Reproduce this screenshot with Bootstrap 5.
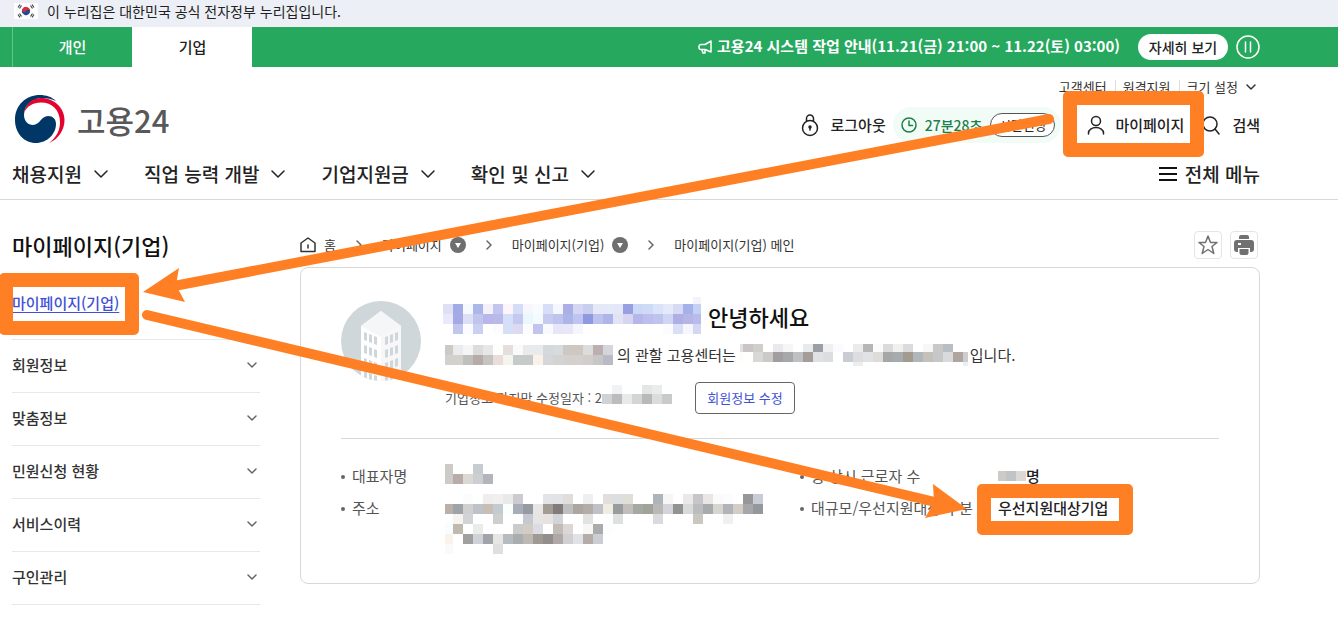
<!DOCTYPE html>
<html lang="ko">
<head>
<meta charset="utf-8">
<meta name="viewport" content="width=device-width, initial-scale=1">
<title>마이페이지(기업) - 고용24</title>
<link href="https://cdn.jsdelivr.net/npm/bootstrap@5.3.0/dist/css/bootstrap.min.css" rel="stylesheet">
<style>
  body { font-family: "Noto Sans CJK KR", sans-serif; font-size: 15px; line-height: 20px; color: #222; overflow-x: hidden; }
  a { color: inherit; text-decoration: none; }
  svg { display: block; flex: none; }
  .plain { border: 0; background: none; padding: 0; color: inherit; font: inherit; }
  .ic { fill: none; stroke: currentColor; stroke-width: 1.5; stroke-linecap: round; stroke-linejoin: round; }
  .wrap { padding-left: 12px; padding-right: 78px; }
  .gov-bar { background: #eceff5; height: 27px; font-size: 14px; padding-bottom: 6px; gap: 9px; padding-left: 14px; }
  .top-bar { background: #26a95f; height: 40px; color: #fff; }
  .top-tab { width: 120px; font-weight: 500; border-left: 1px solid #67c48f; }
  .top-tab.active { background: #fff; color: #222; border-color: #fff; }
  .notice { font-size: 15px; font-weight: 700; padding-bottom: 2px; }
  .pill-white { background: #fff; color: #222; border-radius: 13px; width: 90px; height: 26px; font-size: 14px; font-weight: 500; margin-left: 18px; }
  .site-head { border-bottom: 1px solid #d8d8d8; height: 133px; }
  .util { font-size: 13px; color: #333; height: 20px; margin-top: 10px; }
  .util > * { line-height: 14px; }
  .util > * + * { border-left: 1px solid #ddd; margin-left: 8px; padding-left: 7px; }
  .logo { font-size: 31px; line-height: 40px; font-weight: 500; color: #58585a; gap: 12px; padding: 28px 0 0 3px; }
  .tools { font-weight: 500; height: 36px; margin-top: 10px; }
  .tools .lock { gap: 9px; }
  .timer { background: #f2fcf7; color: #1d804b; border-radius: 18px; height: 36px; padding: 0 6px 0 8px; gap: 8px; font-size: 14px; margin-left: 7px; }
  .timer button { width: 65px; height: 24px; border: 1px solid #555; border-radius: 12px; background: #fff; color: #222; font-size: 13px; line-height: 20px; }
  .main-nav { font-size: 19px; line-height: 28px; font-weight: 500; height: 28px; margin-top: 16px; }
  .main-nav button { gap: 12px; }
  .main-nav .all-menu { gap: 8px; }
  .nav-set { gap: 36px; }
  .page-cols { gap: 40px; }
  .side { width: 248px; flex: none; }
  .side h1 { font-size: 22px; line-height: 32px; font-weight: 500; color: #111; margin: 29px 0 32px; }
  .side li { height: 53px; border-bottom: 1px solid #e8e8e8; font-weight: 500; color: #333; padding: 0 2px 2px 0; }
  .side li svg { color: #666; }
  .side li.first { height: 47px; padding-bottom: 26px; }
  .side li.first a { color: #3f52d6; text-decoration: underline; text-underline-offset: 3px; }
  .content { min-width: 0; }
  .crumbs { font-size: 13px; height: 28px; margin-top: 31px; color: #333; }
  .crumbs .sep { margin: 0 19px; color: #666; }
  .crumb-tools { padding-right: 2px; }
  .sq { width: 28px; height: 28px; border: 1px solid #e5e5e5; border-radius: 4px; color: #707070; }
  .panel { border: 1px solid #d8d8d8; border-radius: 8px; margin-top: 8px; padding: 29px 40px 25px; min-height: 317px; }
  .intro { gap: 22px; }
  .indent { padding-left: 2px; }
  .hello { font-size: 22px; line-height: 34px; font-weight: 500; color: #111; gap: 7px; }
  .center-line { line-height: 24px; margin-top: 9px; color: #333; }
  .date-line { font-size: 13px; margin-top: 15px; color: #555; }
  .edit { width: 100px; height: 32px; font-size: 13px; color: #4050d8; background: #fff; border: 1px solid #666; border-radius: 4px; margin-left: 22px; }
  .facts { border-top: 1px solid #d8d8d8; margin-top: 24px; padding-top: 21px; column-gap: 40px; display: grid; grid-template-columns: 1fr 1fr; }
  .facts dl { margin: 0; display: grid; line-height: 32px; }
  .facts dt, .facts dd { margin: 0; font-weight: 400; color: #555; }
  .facts dt::before { content: ""; display: inline-block; width: 4px; height: 4px; border-radius: 2px; background: #666; margin-right: 7px; vertical-align: 3px; }
  .facts dd { color: #222; font-weight: 500; }
  .left-facts { grid-template-columns: 104px 1fr; }
  .facts .right-facts { grid-template-columns: 198px 1fr; margin-left: -3px; }
  .marks { position: absolute; left: 0; top: 0; pointer-events: none; }
</style>
<script src="https://cdn.jsdelivr.net/npm/bootstrap@5.3.0/dist/js/bootstrap.bundle.min.js"></script>
</head>
<body class="position-relative">

<div class="gov-bar d-flex align-items-center">
  <svg width="24" height="16" viewBox="0 0 24 16"><rect width="24" height="16" fill="#fff"/><g transform="rotate(25 12 8)"><path d="M8 8a4 4 0 0 1 8 0z" fill="#d5303e"/><path d="M8 8a4 4 0 0 0 8 0z" fill="#1d4b9c"/><circle cx="10" cy="8" r="2" fill="#d5303e"/><circle cx="14" cy="8" r="2" fill="#1d4b9c"/></g><path d="M4 4.500l2-3M5.500 5.500l2-3M18 1.500l2 3M16.500 2.500l2 3M4 11.500l2 3M5.500 10.500l2 3M18 14.500l2-3M16.500 13.500l2-3" stroke="#444" stroke-width="1.200"/></svg>
  <span>이 누리집은 대한민국 공식 전자정부 누리집입니다.</span>
</div>

<div class="top-bar wrap d-flex">
  <a href="#" class="top-tab d-flex align-items-center justify-content-center">개인</a>
  <a href="#" class="top-tab active d-flex align-items-center justify-content-center">기업</a>
  <div class="ms-auto d-flex align-items-center">
    <svg class="ic" width="15" height="14" viewBox="0 0 15 14"><path d="M13 1v11L7 9.500H3a2 2 0 0 1-2-2v-1a2 2 0 0 1 2-2h4zM4 10l1 3h2V10"/></svg>
    <a href="#" class="notice ms-1">고용24 시스템 작업 안내(11.21(금) 21:00 ~ 11.22(토) 03:00)</a>
    <button type="button" class="plain pill-white">자세히 보기</button>
    <button type="button" class="plain ms-2" aria-label="정지"><svg class="ic" width="24" height="24" viewBox="0 0 24 24"><circle cx="12" cy="12" r="11"/><path d="M9.500 7v10M14.500 7v10"/></svg></button>
  </div>
</div>

<header class="site-head wrap">
  <div class="d-flex justify-content-between">
    <a href="#" class="logo d-flex align-items-center">
      <svg width="50" height="49" viewBox="0 0 50 49"><path d="M41 6C37 2 31 0 25 0 11 0 0 10 0 25c0 13 9 23 21 23 11 0 20-9 20-19 0-5-3-8-8-8-7 0-8 9-15 9-5 0-9-4-9-10C9 10 17 4 26 3c6 0 11 1 15 3z" fill="#003767"/><path d="M9 18C11 8 18 3 26 3c13 0 23.500 10 23.500 22 0 10-6 19-15.500 23 8-6 11-13 11-21C45 15 37 7.500 26 7.500 18 7.500 12 11 9 18z" fill="#e4032e"/></svg>
      <span>고용24</span>
    </a>
    <div>
      <div class="util d-flex justify-content-end align-items-center">
        <a href="#">고객센터</a><a href="#">원격지원</a>
        <button type="button" class="util-size border-top-0 border-end-0 border-bottom-0 bg-transparent py-0 pe-1 text-reset d-flex align-items-center gap-2">크기 설정 <svg class="ic" width="10" height="8" viewBox="0 0 10 8"><path d="M1 2l4 4 4-4"/></svg></button>
      </div>
      <div class="tools d-flex align-items-center">
        <a href="#" class="lock d-flex align-items-center">
          <svg class="ic" width="22" height="24" viewBox="0 0 22 24"><circle cx="11" cy="15" r="7.500"/><path d="M7.500 8V5.500a3.500 3.500 0 0 1 7 0V8"/><circle cx="11" cy="14" r="1" fill="currentColor"/><path d="M11 14v3"/></svg>로그아웃</a>
        <div class="timer d-flex align-items-center">
          <svg class="ic" width="16" height="16" viewBox="0 0 16 16"><circle cx="8" cy="8" r="7"/><path d="M8 4v4.500h3.500"/></svg>
          <span>27분28초</span><button type="button" class="p-0">시간연장</button>
        </div>
        <a href="#" class="d-flex align-items-center ms-4"><svg class="ic me-2" width="22" height="20" viewBox="0 0 22 20"><circle cx="11" cy="6" r="4.500"/><path d="M3.500 19v-1a7.500 5.500 0 0 1 15 0v1"/></svg>마이페이지</a>
        <a href="#" class="d-flex align-items-center ms-3 gap-2"><svg class="ic me-1" width="20" height="20" viewBox="0 0 20 20"><circle cx="10" cy="9" r="7"/><path d="M15 14l4 5"/></svg>검색</a>
      </div>
    </div>
  </div>
  <nav class="main-nav d-flex align-items-center">
    <div class="d-flex nav-set">
      <button type="button" class="plain d-flex align-items-center">채용지원 <svg class="ic" width="14" height="10" viewBox="0 0 14 10"><path d="M1 2l6 6 6-6"/></svg></button>
      <button type="button" class="plain d-flex align-items-center">직업 능력 개발 <svg class="ic" width="14" height="10" viewBox="0 0 14 10"><path d="M1 2l6 6 6-6"/></svg></button>
      <button type="button" class="plain d-flex align-items-center">기업지원금 <svg class="ic" width="14" height="10" viewBox="0 0 14 10"><path d="M1 2l6 6 6-6"/></svg></button>
      <button type="button" class="plain d-flex align-items-center">확인 및 신고 <svg class="ic" width="14" height="10" viewBox="0 0 14 10"><path d="M1 2l6 6 6-6"/></svg></button>
    </div>
    <button type="button" class="plain d-flex align-items-center ms-auto all-menu"><svg width="18" height="16" viewBox="0 0 18 16"><path d="M0 2h18M0 8h18M0 14h18" stroke="#111" stroke-width="2"/></svg>전체 메뉴</button>
  </nav>
</header>

<div class="wrap d-flex page-cols">
  <aside class="side">
    <h1>마이페이지(기업)</h1>
    <ul class="list-unstyled m-0">
      <li class="first d-flex align-items-center"><a href="#">마이페이지(기업)</a></li>
      <li class="d-flex align-items-center justify-content-between"><a href="#">회원정보</a><svg class="ic" width="12" height="8" viewBox="0 0 12 8"><path d="M2 2l4 4 4-4"/></svg></li>
      <li class="d-flex align-items-center justify-content-between"><a href="#">맞춤정보</a><svg class="ic" width="12" height="8" viewBox="0 0 12 8"><path d="M2 2l4 4 4-4"/></svg></li>
      <li class="d-flex align-items-center justify-content-between"><a href="#">민원신청 현황</a><svg class="ic" width="12" height="8" viewBox="0 0 12 8"><path d="M2 2l4 4 4-4"/></svg></li>
      <li class="d-flex align-items-center justify-content-between"><a href="#">서비스이력</a><svg class="ic" width="12" height="8" viewBox="0 0 12 8"><path d="M2 2l4 4 4-4"/></svg></li>
      <li class="d-flex align-items-center justify-content-between"><a href="#">구인관리</a><svg class="ic" width="12" height="8" viewBox="0 0 12 8"><path d="M2 2l4 4 4-4"/></svg></li>
    </ul>
  </aside>
  <main class="content flex-grow-1">
    <div class="crumbs d-flex align-items-center">
      <a href="#" class="d-flex align-items-center gap-2"><svg class="ic" width="16" height="16" viewBox="0 0 16 16"><path d="M1 6l7-5 7 5v8.500H1zM8 8v3"/></svg>홈</a>
      <svg class="ic sep" width="8" height="10" viewBox="0 0 8 10"><path d="M2 1l4 4-4 4"/></svg>
      <a href="#" class="d-flex align-items-center gap-2">마이페이지 <svg width="16" height="16" viewBox="0 0 16 16"><circle cx="8" cy="8" r="8" fill="#6f6f6f"/><path d="M5 6h6l-3 5z" fill="#fff"/></svg></a>
      <svg class="ic sep" width="8" height="10" viewBox="0 0 8 10"><path d="M2 1l4 4-4 4"/></svg>
      <a href="#" class="d-flex align-items-center gap-2">마이페이지(기업) <svg width="16" height="16" viewBox="0 0 16 16"><circle cx="8" cy="8" r="8" fill="#6f6f6f"/><path d="M5 6h6l-3 5z" fill="#fff"/></svg></a>
      <svg class="ic sep" width="8" height="10" viewBox="0 0 8 10"><path d="M2 1l4 4-4 4"/></svg>
      <span>마이페이지(기업) 메인</span>
      <div class="crumb-tools d-flex gap-2 ms-auto">
        <button type="button" class="p-0 bg-transparent sq d-flex align-items-center justify-content-center" aria-label="즐겨찾기"><svg class="ic" width="22" height="22" viewBox="0 0 22 22"><path d="M11 2l2.500 6.500H20L15 12.500l1.800 7L11 15.500l-5.800 4L7 12.500 2 8.500h6.500z"/></svg></button>
        <button type="button" class="p-0 bg-transparent sq d-flex align-items-center justify-content-center" aria-label="인쇄"><svg width="20" height="20" viewBox="0 0 20 20" fill="#707070"><path d="M5 4V2q0-2 2-2h6q2 0 2 2v2zM3 5h14q3 0 3 3v6q0 3-3 3h-1v-4H4v4H3q-3 0-3-3V8q0-3 3-3z"/><path d="M5.500 14h9v4q0 2-2 2h-5q-2 0-2-2z"/><rect x="4" y="8" width="3" height="2" fill="#fff"/></svg></button>
      </div>
    </div>
    <section class="panel">
      <div class="d-flex intro">
        <svg width="80" height="84" viewBox="0 0 80 84">
          <defs><clipPath id="round"><circle cx="40" cy="44" r="40"/></clipPath></defs>
          <g clip-path="url(#round)"><rect width="80" height="84" fill="#cfd7da"/>
          <path d="M20 29l20-15 20 15v55H20z" fill="#fff"/><path d="M20 29l20-15 20 15-20 11z" fill="#f5f6f7"/><path d="M40 40l20-11v55H40z" fill="#f7f7f8"/>
          <g fill="#cfd7da" id="windows"></g></g>
        </svg>
        <div>
          <div class="hello d-flex align-items-center"><svg class="mosaic" width="258" height="37" viewBox="0 0 258 37" data-y="0,7,17,27" data-rows="- - - - - - - - - - - - - - - - - - - - - - - - - f3f3fd|dfdff5 a3abe6 f4fafe abb6e9 f2f1fc c2c5ee fcf6fb d5ddf6 f5f6fe f9fcfe d8def7 f6f7fe abafe6 d5d6f4 c8ceee e5e8f7 e5e8f7 e4e7f8 989fe3 cbd9f6 cfdbf6 dae3fa e4eaf9 d6daf5 a7b1e9 c3d1f4|ebe9f9 a5a9e6 dddff5 c1c5ee b8b7eb bab9ea d4e0fa c6c8f0 eaf8fd f3fbfe c5caef bfc4ee acb5e9 c0c5ef 8f99e0 bcc2ed aeb6e9 e3e3f6 d6d5f2 b5b7ea bdbeec bfc4ee cfd6f4 b1aee5 b6b5e8 b9bbec|- c1c6ef fbfcff c9d0f2 - fcfcff d5dff6 dcdaf2 fcfcff c2c3ef f8fbfe e7e6f8 e8e6f8 f4f5fd - - - - - - - - fbfcff d8dff7 f7f5fd d3d7f4"></svg>안녕하세요</div>
          <div class="center-line indent d-flex align-items-center">
            <svg class="mosaic" width="168" height="20" viewBox="2 0 168 20" data-y="0,10" data-rows="cdc9c6 e9ebec f4f5f5 dcdddb e7e7e7 fefefe e4dfdd fafafa e9eaeb e9eaeb d4d9dc d7dbde cdc8c1 cdc8c1 dcdddb bbafb1 d4d6da|d3d1ce d3d1ce bfbfbf b5aca8 c8c3c1 e8ddd8 f4f4f1 c6cac9 c6cac9 faf1e8 d4d6d9 d3d3d1 d3d0ce d3d0ce d0cdca c7c7c8 b9bac5"></svg>
            <span class="px-1">의 관할 고용센터는</span>
            <svg class="mosaic" width="228" height="22" viewBox="7 0 228 22" data-y="0,8,18" data-rows="e2e2e3 c9c5c5 d0cecb - e8eaed f6f6f7 - e9eaeb 9b9ea5 f0f0f2 f9fbff - ebebed b8b5b6 fbfbfb dadbdd f0f0ef dadbdc - f6f7f7 c8c8c7 b9bec4|fdfcf5 - d8d8d7 cacac9 a19da1 a6a8a9 bfc0c1 a49c98 dfe1e4 dcdddf - c9ccd2 dddddf e0e2e5 dedcd8 a5a7a7 a6acad a39a90 b1b6b8 c3c1b9 c5c7c9 d9dadb afa49f cccdd1|- - - - - - - - - - - - ededee - - - - - - - - - - ededf2"></svg>
            <span class="indent">입니다.</span>
          </div>
          <div class="date-line indent d-flex align-items-center">기업정보 마지막 수정일자 : 2
            <svg class="mosaic mb-2" width="71" height="19" viewBox="0 0 71 19" data-y="0,9" data-rows="- f1f2f3 - - e3e6e7 ebebea -|d0d2d6 bcbcbc e8e9e9 d3d5d6 b8b9b9 dadcde c9caca"></svg>
            <button type="button" class="edit p-0">회원정보 수정</button>
          </div>
        </div>
      </div>
      <div class="facts">
        <dl class="left-facts">
          <dt>대표자명</dt><dd><svg class="mosaic mt-1" width="48" height="20" viewBox="2 0 48 20" data-y="0,10" data-rows="cdcbc7 - - c7ccd0 -|cdcbc7 b7aca7 dcd8d4 cccecf b2b6bb"></svg></dd>
          <dt>주소</dt><dd><svg class="mosaic" width="318" height="62" viewBox="2 -2 318 62" data-y="0,10,20,30,40,50" data-rows="- - fcfcfc - eeeeee f2f0ef e9e9ea ccccd0 - - e2e4e8 e1e3e6 dfdedd - efefef - e2dedd dcdfe2 e0ded9 - - adb4ba f6f6f7 - ebe9e8 c6c5ca e9e7e6 fafafa fbfcfe - 979797 c7ccd7|bbb0a9 9fa3a7 d0d0d1 c0c2c9 c8beb6 c2cbcf f9ffff a7aeb9 969aa2 e8e6e5 a39c94 817b7a bfbfbf aca6a3 b3aca8 bfc0c8 f1ece1 989c9b c2bebc a5a9a4 a1a39b bab8b6 d4d5da 919292 dadada bbbdbc a7abaa d7d5cf b1b3b8 d3cdc5 a6a7ab 94989d|fdfeff f6f3f1 d1d3d5 - - cccfcd - - c5c8ce e6e5e3 e6e2df d3d4d8 - - e2e2e1 - - dfe1e1 - - - d9dadd - - - cac6c2 - - f0f0f0|fafdff bfb9b0 - ebebea - - - cbcbcb d1ccc6 dbdde2 - c1bcb7 dcd7d5 - f7f7f7 ababad fbfdff|faf3eb - a0a0a1 cfd3d7 a0a3aa e7e6e5 b6bbbf aaadaf bdb9b1 9e9993 928e8b aea9a6 d0d0d2 e0e2e7 b5aca8 cacdd4|fafafa - - - - dfdfdf"></svg></dd>
        </dl>
        <dl class="right-facts align-content-start">
          <dt>총 상시 근로자 수</dt><dd class="d-flex align-items-center"><svg class="mosaic" width="28" height="10" viewBox="2 0 28 10" data-y="0" data-rows="cecac8 c2c3c5 dcd8d6"></svg>명</dd>
          <dt>대규모/우선지원대상 구분</dt><dd>우선지원대상기업</dd>
        </dl>
      </div>
    </section>
  </main>
</div>

<svg class="marks" width="1338" height="620" viewBox="0 0 1338 620" fill="#ff8024" fill-rule="evenodd" aria-hidden="true">
  <path d="M1049 119L174 286M147 315l788 187" stroke="#ff8024" stroke-width="10" stroke-linecap="round"/>
  <path d="M143 292l36-24-3 17 9 17zM967 509l-34-25 1 18-9 16z"/>
  <path d="M1068 91h131a5 5 0 0 1 5 5v56a5 5 0 0 1-5 5h-131a5 5 0 0 1-5-5V96a5 5 0 0 1 5-5zM1077 105v38h113v-38z"/>
  <path d="M4 273h130a5 5 0 0 1 5 5v52a5 5 0 0 1-5 5H4a5 5 0 0 1-5-5v-52a5 5 0 0 1 5-5zM13 287v34h112v-34z"/>
  <path d="M982 484h146a5 5 0 0 1 5 5v41a5 5 0 0 1-5 5H982a5 5 0 0 1-5-5v-41a5 5 0 0 1 5-5zM991 498v23h128v-23z"/>
</svg>

<script>
  // Privacy mosaics: each row lists the colours of 10px cells, "-" is an empty cell.
  document.querySelectorAll('.mosaic').forEach(function (svg) {
    var ys = svg.dataset.y.split(',').map(Number), bottom = svg.viewBox.baseVal.height + svg.viewBox.baseVal.y;
    svg.innerHTML = svg.dataset.rows.split('|').map(function (row, r) {
      var h = (ys[r + 1] || bottom) - ys[r];
      return row.split(' ').map(function (c, i) {
        return c === '-' ? '' : '<rect x="' + i * 10 + '" y="' + ys[r] + '" width="10" height="' + h + '" fill="#' + c + '"/>';
      }).join('');
    }).join('');
    svg.setAttribute('shape-rendering', 'crispEdges');
  });
  // Windows of the office building, slanting down to the middle edge.
  var out = '';
  for (var r = 0; r < 4; r++) for (var i = 0; i < 3; i++) {
    var x = 23 + i * 5, y = 35 + r * 13 + i * 2;
    out += '<path d="M' + x + ' ' + y + 'l3 1v8l-3-1z"/><path d="M' + (80 - x) + ' ' + y + 'l-3 1v8l3-1z"/>';
  }
  document.getElementById('windows').innerHTML = out;
</script>
</body>
</html>
